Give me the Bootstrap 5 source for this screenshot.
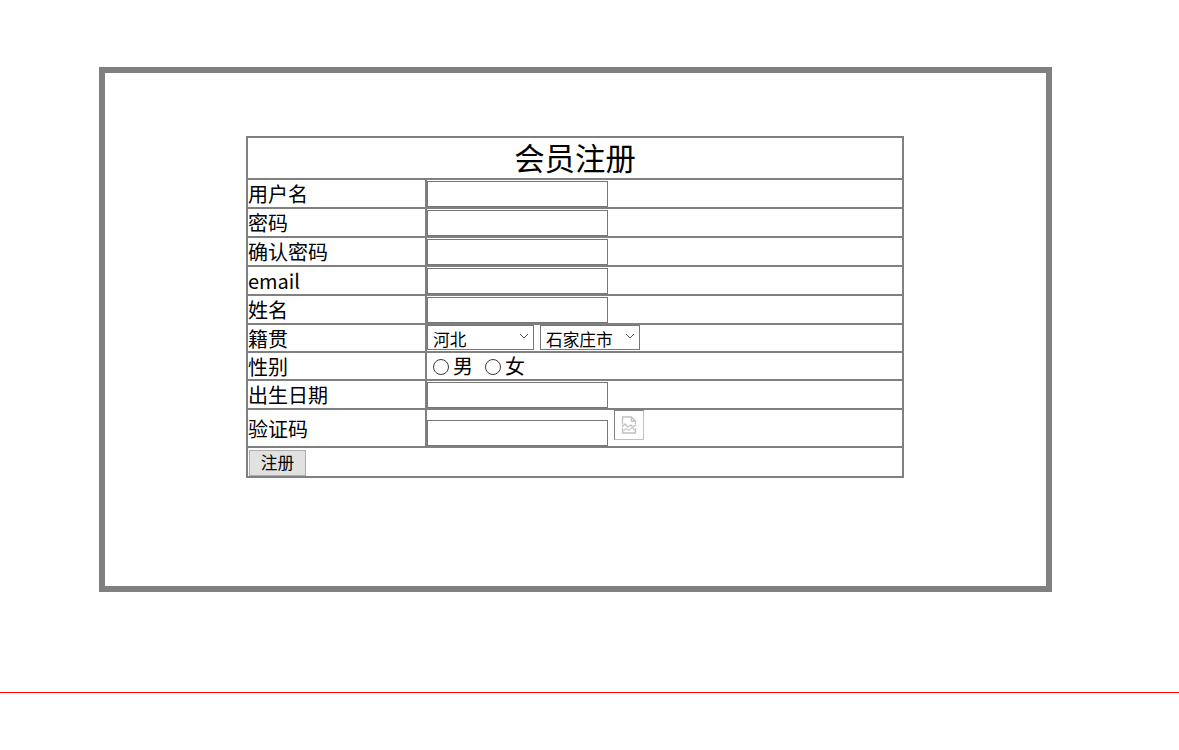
<!DOCTYPE html>
<html lang="zh-CN">
<head>
<meta charset="utf-8">
<title>会员注册</title>
<link href="https://cdn.jsdelivr.net/npm/bootstrap@5.3.0/dist/css/bootstrap.min.css" rel="stylesheet">
<style>
body{background:#fff;color:#000;font-family:"Noto Sans CJK SC","Liberation Sans",sans-serif;font-size:20px;line-height:1.3;margin:0}
.frame{box-sizing:border-box;width:953px;height:525px;margin:67px 0 0 99px;border:6px solid #808080;padding-top:63px}
.reg-table{box-sizing:border-box;width:658px;margin-left:141px;border-collapse:separate;border-spacing:0;border:1px solid #808080;table-layout:fixed}
.reg-table td{border:1px solid #808080;padding:0;vertical-align:middle;font-size:20px;line-height:26px;white-space:nowrap}
.col-lab{width:179px}
.reg-table .title-cell{height:42px;font-size:30.4px;line-height:34px;text-align:center;padding-bottom:2px}
.h29{height:29px}.h28{height:28px}.h38{height:38px}.h30{height:30px}
.reg-table .lab-low{line-height:24px;padding-top:2px}
.inp{box-sizing:border-box;width:181px;height:26px;border:1px solid #767676;border-radius:0;padding:1px 2px;background:#fff;display:inline-block;vertical-align:top;margin-top:1px}
.sel{box-sizing:border-box;height:25px;border:1px solid #767676;background:#fff;display:inline-block;vertical-align:top;font-size:16.67px;line-height:23px;padding:2px 0 0 5px;font-family:inherit;appearance:none;border-radius:0;color:#000;outline:0}
.sel-a{width:107px;margin-left:0}.sel-b{width:100px;margin-left:6px}
.sel-wrap{display:inline-block;position:relative;vertical-align:top}
.chev{position:absolute;top:8px;right:5px;width:10px;height:6px;pointer-events:none}
.rad{display:inline-block;width:16px;height:16px;border:1px solid #3c3c3c;border-radius:50%;vertical-align:-1px;margin:0 4px 0 6px;appearance:none;background:#fff}
.rad-b{margin-left:12px}
.code-wrap{display:flex;align-items:flex-end;height:36px}
.code-wrap .inp{margin:0}
.code-pic{box-sizing:border-box;width:30px;height:30px;margin:0 0 6px 6px;border:1px solid #c0c0c0;border-top-color:#808080;border-left-color:#808080;display:flex;align-items:center;justify-content:center}
.reg-btn{box-sizing:border-box;width:57px;height:26px;margin:1px 0 0 1px;background:#e1e1e1;border:1px solid #adadad;border-radius:0;padding:0 0 2px;font-size:16.67px;line-height:22px;color:#000;font-family:inherit;display:block}
.redline{border:0;border-top:1px solid #f00;opacity:1;margin:100px 0 0;height:0}
</style>
</head>
<body>
<div class="frame">
<table class="reg-table">
<colgroup><col class="col-lab"><col></colgroup>
<tr><td colspan="2" class="title-cell">会员注册</td></tr>
<tr><td class="h29">用户名</td><td><input class="inp" type="text"></td></tr>
<tr><td class="h29">密码</td><td><input class="inp" type="password"></td></tr>
<tr><td class="h29">确认密码</td><td><input class="inp" type="password"></td></tr>
<tr><td class="h29">email</td><td><input class="inp" type="text"></td></tr>
<tr><td class="h29">姓名</td><td><input class="inp" type="text"></td></tr>
<tr><td class="h28 lab-low">籍贯</td><td><span class="sel-wrap"><select class="sel sel-a"><option>河北</option></select><svg class="chev" viewBox="0 0 10 6"><path d="M1 1l4 4 4-4" fill="none" stroke="#555" stroke-width="1"/></svg></span><span class="sel-wrap"><select class="sel sel-b"><option>石家庄市</option></select><svg class="chev" viewBox="0 0 10 6"><path d="M1 1l4 4 4-4" fill="none" stroke="#555" stroke-width="1"/></svg></span></td></tr>
<tr><td class="h28 lab-low">性别</td><td><input type="radio" class="rad" name="sex">男<input type="radio" class="rad rad-b" name="sex">女</td></tr>
<tr><td class="h29">出生日期</td><td><input class="inp" type="text"></td></tr>
<tr><td class="h38 lab-low">验证码</td><td><div class="code-wrap"><input class="inp" type="text"><span class="code-pic"><svg width="16" height="18" viewBox="0 0 16 18"><path d="M1.500 8.500V1h9l4 4v3.500M14.500 12v5H1.500V12" fill="none" stroke="#c0c0c0" stroke-width="1.300"/><path d="M10.500 1v4h4" fill="none" stroke="#c0c0c0" stroke-width="1.300"/><path d="M1 11l3-3 3 3 3-2 2 2 3-2" fill="none" stroke="#c0c0c0" stroke-width="1.300"/><path d="M2 15.500l3-3 3 2 3-3 3 3" fill="none" stroke="#cfcfcf" stroke-width="1.300"/></svg></span></div></td></tr>
<tr><td colspan="2" class="h30"><button type="button" class="reg-btn">注册</button></td></tr>
</table>
</div>
<hr class="redline">
</body>
</html>
